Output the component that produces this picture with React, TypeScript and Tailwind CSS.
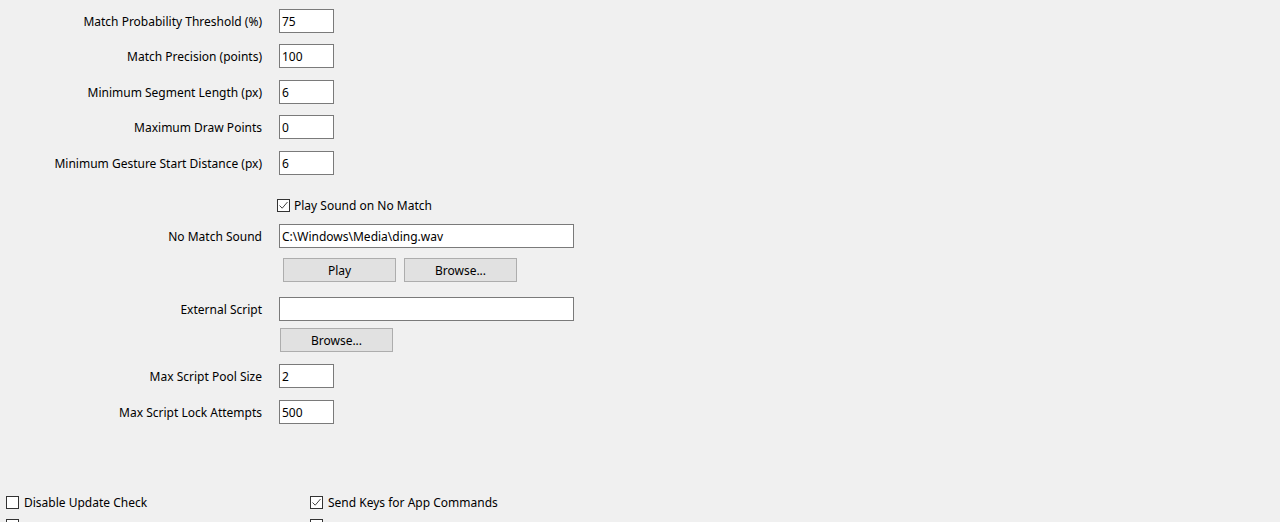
import React from "react";

const font = { fontFamily: '"Segoe UI", "Noto Sans", "Open Sans", sans-serif' };

const Field = ({ label, value, wide, className = "" }: { label: string; value: string; wide?: boolean; className?: string }) => (
  <div className={`flex items-center h-[24px] ${className}`}>
    <div className="w-[262px] pt-[2px] text-right text-[12px] text-black whitespace-nowrap">{label}</div>
    <div
      className={`ml-[17px] h-[24px] border border-[#7a7a7a] bg-white px-[2px] pt-[1px] text-[12px] leading-[21px] text-black ${
        wide ? "w-[295px]" : "w-[55px]"
      }`}
    >
      {value}
    </div>
  </div>
);

const Check = ({ checked }: { checked?: boolean }) => (
  <span className="inline-flex h-[13px] w-[13px] shrink-0 items-center justify-center border border-[#333333] bg-white">
    {checked && (
      <svg width="11" height="11" viewBox="0 0 11 11">
        <path d="M1.5 5.5 L4.2 8.2 L9.5 2" fill="none" stroke="#444444" strokeWidth="1" />
      </svg>
    )}
  </span>
);

const Btn = ({ children, className = "" }: { children: React.ReactNode; className?: string }) => (
  <div
    className={`flex h-[24px] w-[113px] items-center justify-center border border-[#adadad] bg-[#e1e1e1] pt-[2px] text-[12px] text-black ${className}`}
  >
    {children}
  </div>
);

export default function App() {
  return (
    <div className="h-[522px] w-[1280px] overflow-hidden bg-[#f0f0f0]" style={font}>
      <div className="flex flex-col">
        <Field label="Match Probability Threshold (%)" value="75" className="mt-[9px]" />
        <Field label="Match Precision (points)" value="100" className="mt-[11px]" />
        <Field label="Minimum Segment Length (px)" value="6" className="mt-[12px]" />
        <Field label="Maximum Draw Points" value="0" className="mt-[11px]" />
        <Field label="Minimum Gesture Start Distance (px)" value="6" className="mt-[12px]" />

        <div className="mt-[18px] flex h-[24px] items-center pl-[277px]">
          <Check checked />
          <span className="ml-[4px] pt-[2px] text-[12px] text-black">Play Sound on No Match</span>
        </div>

        <Field label="No Match Sound" value="C:\Windows\Media\ding.wav" wide className="mt-[7px]" />

        <div className="mt-[10px] flex gap-[8px] pl-[283px]">
          <Btn>Play</Btn>
          <Btn>Browse...</Btn>
        </div>

        <Field label="External Script" value="" wide className="mt-[15px]" />

        <div className="mt-[7px] flex pl-[280px]">
          <Btn>Browse...</Btn>
        </div>

        <Field label="Max Script Pool Size" value="2" className="mt-[12px]" />
        <Field label="Max Script Lock Attempts" value="500" className="mt-[12px]" />

        <div className="mt-[66px] grid grid-cols-[304px_1fr] pl-[6px]">
          <div className="flex h-[24px] items-center">
            <Check />
            <span className="ml-[5px] pt-[2px] text-[12px] text-black">Disable Update Check</span>
          </div>
          <div className="flex h-[24px] items-center">
            <Check checked />
            <span className="ml-[5px] pt-[2px] text-[12px] text-black">Send Keys for App Commands</span>
          </div>
          <div className="mt-[-1px] flex h-[24px] items-center">
            <Check />
          </div>
          <div className="mt-[-1px] flex h-[24px] items-center">
            <Check />
          </div>
        </div>
      </div>
    </div>
  );
}
